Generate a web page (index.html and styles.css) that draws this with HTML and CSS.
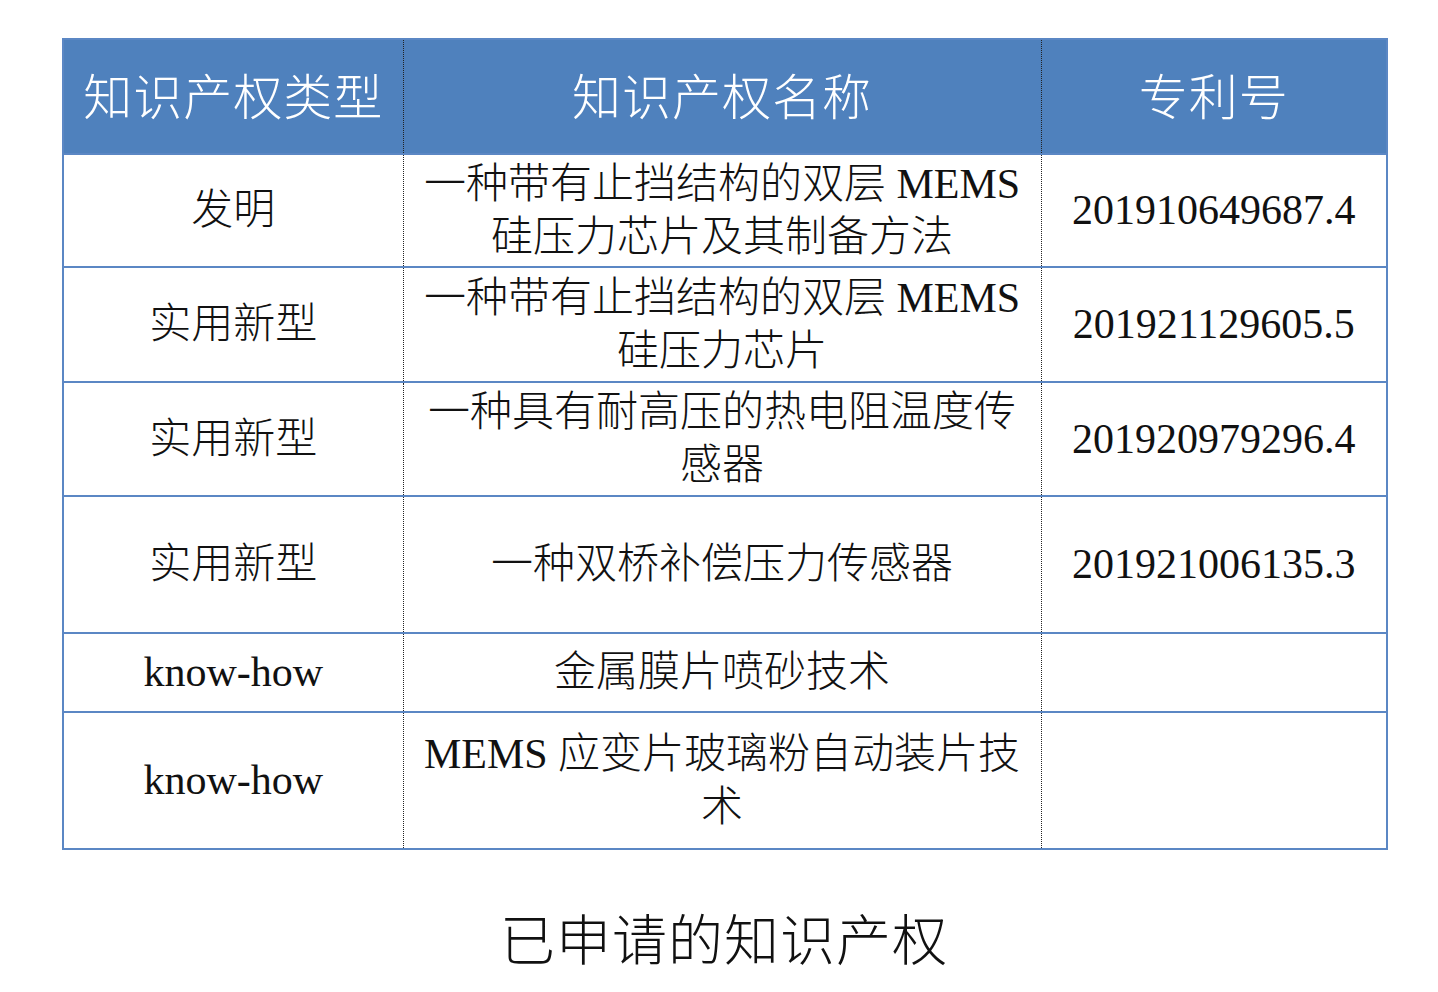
FILE: index.html
```html
<!DOCTYPE html>
<html lang="zh">
<head>
<meta charset="utf-8">
<title>已申请的知识产权</title>
<link rel="stylesheet" href="styles.css">
</head>
<body>
<div class="page">
  <table class="ip-table">
    <colgroup>
      <col class="c1">
      <col class="c2">
      <col class="c3">
    </colgroup>
    <thead>
      <tr class="head">
        <th>知识产权类型</th>
        <th>知识产权名称</th>
        <th>专利号</th>
      </tr>
    </thead>
    <tbody>
      <tr class="r1">
        <td>发明</td>
        <td class="name">一种带有止挡结构的双层 MEMS<br>硅压力芯片及其制备方法</td>
        <td>201910649687.4</td>
      </tr>
      <tr class="r2">
        <td>实用新型</td>
        <td class="name">一种带有止挡结构的双层 MEMS<br>硅压力芯片</td>
        <td>201921129605.5</td>
      </tr>
      <tr class="r3">
        <td>实用新型</td>
        <td class="name">一种具有耐高压的热电阻温度传<br>感器</td>
        <td>201920979296.4</td>
      </tr>
      <tr class="r4">
        <td>实用新型</td>
        <td class="name">一种双桥补偿压力传感器</td>
        <td>201921006135.3</td>
      </tr>
      <tr class="r5">
        <td>know-how</td>
        <td class="name">金属膜片喷砂技术</td>
        <td></td>
      </tr>
      <tr class="r6">
        <td>know-how</td>
        <td class="name">MEMS 应变片玻璃粉自动装片技<br>术</td>
        <td></td>
      </tr>
    </tbody>
  </table>
  <p class="caption">已申请的知识产权</p>
</div>
</body>
</html>
```

FILE: styles.css
```css
html, body {
  margin: 0;
  padding: 0;
  background: #ffffff;
}

.page {
  padding: 38px 0 0 62px;
  width: 1324px;
}

.ip-table {
  width: 1324px;
  table-layout: fixed;
  border-collapse: collapse;
  border: 2px solid #5b87c4;
  font-family: "Liberation Serif", "Noto Sans CJK SC", serif;
  color: #111111;
}

.c1 { width: 340px; }
.c2 { width: 638px; }
.c3 { width: 346px; }

.ip-table th,
.ip-table td {
  padding: 0;
  text-align: center;
  vertical-align: middle;
  border-top: 2px solid #5b87c4;
  border-bottom: 2px solid #5b87c4;
  border-left: 1px dotted #222222;
  border-right: 1px dotted #222222;
}

.ip-table th:first-child,
.ip-table td:first-child {
  border-left: 2px solid #5b87c4;
}

.ip-table th:last-child,
.ip-table td:last-child {
  border-right: 2px solid #5b87c4;
}

.head th {
  background: #4f81bd;
  color: #ffffff;
  font-family: "Noto Sans CJK SC", sans-serif;
  font-weight: 300;
  font-size: 49px;
  letter-spacing: 1px;
  height: 107px;
  padding-bottom: 6px;
}

.ip-table td {
  font-size: 42px;
  line-height: 53px;
  font-weight: 300;
}

.r1 td { height: 111px; }
.r2 td { height: 113px; }
.r3 td { height: 112px; }
.r4 td { height: 135px; }
.r5 td { height: 77px; }
.r6 td { height: 135px; }

.caption {
  margin: 53px 0 0 0;
  text-align: center;
  font-family: "Noto Sans CJK SC", sans-serif;
  font-weight: 300;
  font-size: 55px;
  line-height: 66px;
  color: #111111;
  letter-spacing: 1px;
}
```
